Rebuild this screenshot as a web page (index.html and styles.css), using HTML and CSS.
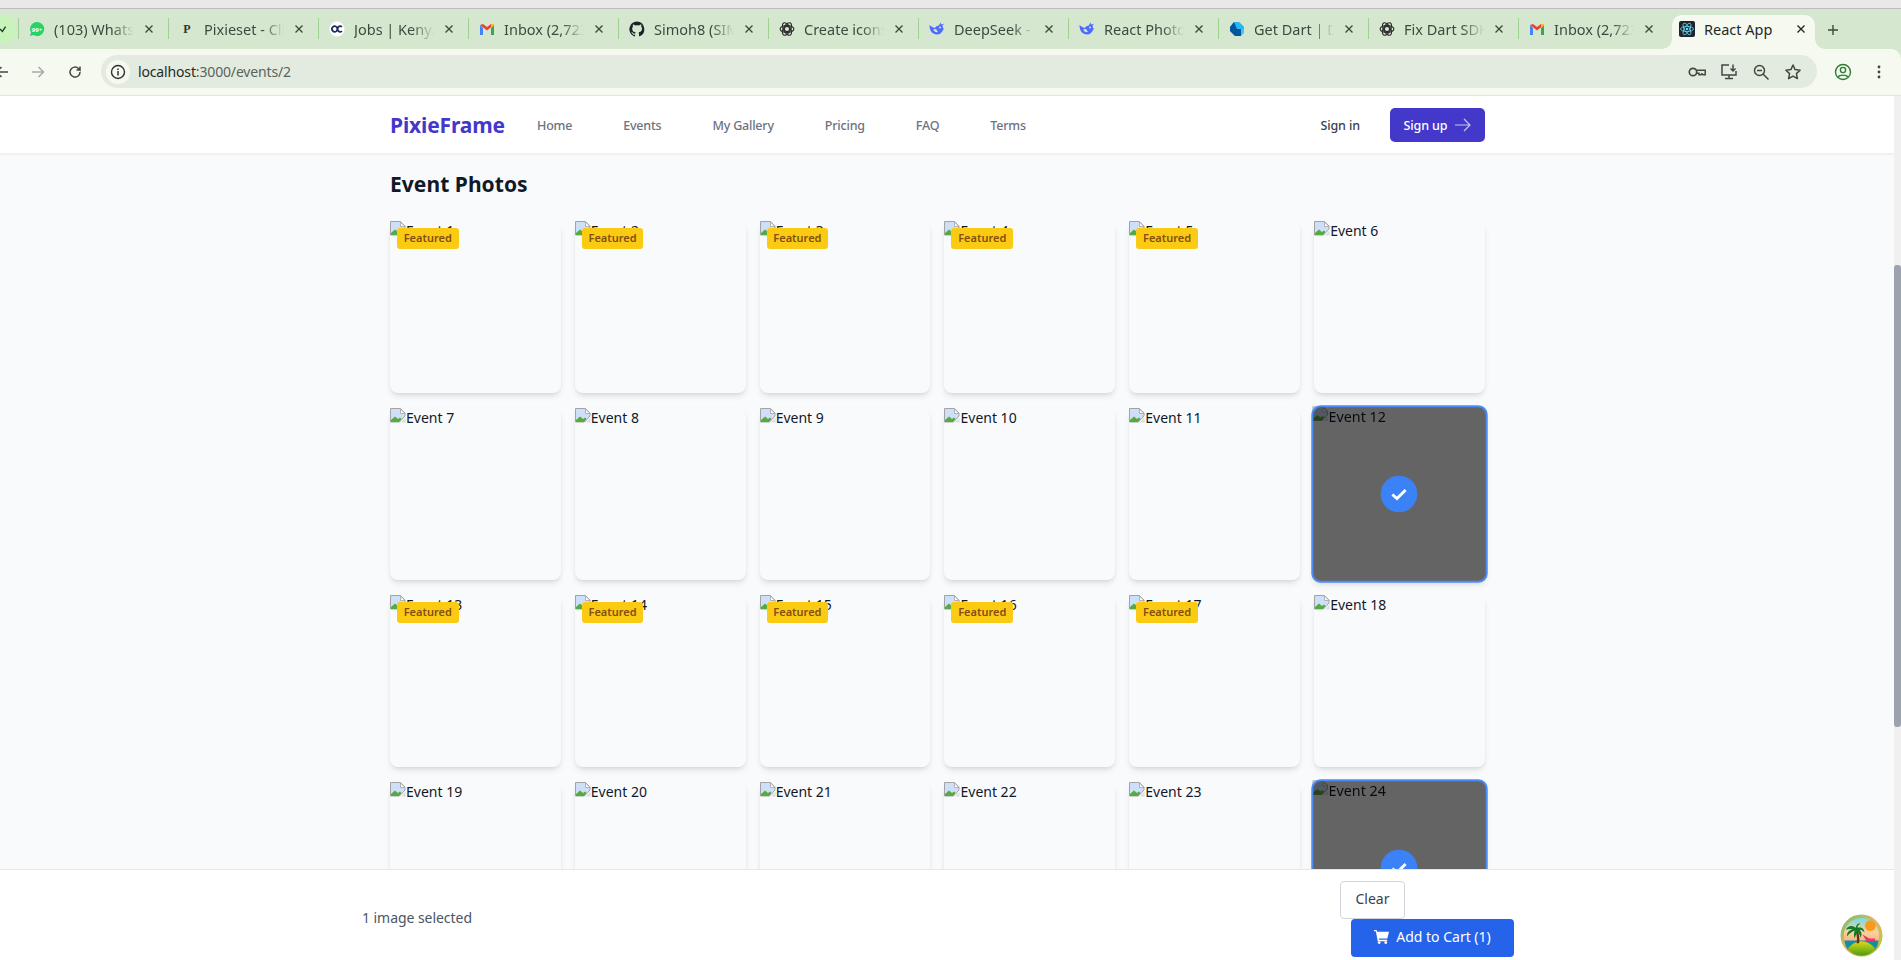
FILE: index.html
```html
<!DOCTYPE html>
<html lang="en">
<head>
<meta charset="utf-8">
<title>React App</title>
<link rel="stylesheet" href="styles.css">
</head>
<body>
<svg class="defs" width="0" height="0" aria-hidden="true">
  <defs>
    <symbol id="broken" viewBox="0 0 16 16">
      <path d="M.5.500h10l4.500 4.500v3l-5.500 6H.5z" fill="#cddff9" stroke="#a3a3a3"/>
      <path d="M10.500 1v4.500H15z" fill="#fff" stroke="#a3a3a3" stroke-width=".8"/>
      <path d="M1 14v-2l4-3.500 3 2.500 2-1.500 1.500 1.500L9 14z" fill="#56ab3e"/>
      <path d="M15.500 9.500L11 14.500h4.500z" fill="#c7c7c7" opacity=".55"/>
    </symbol>
    <symbol id="x" viewBox="0 0 10 10"><path d="M1.500 1.500l7 7m0-7l-7 7" stroke="currentColor" stroke-width="1.400" fill="none"/></symbol>
    <symbol id="gmail" viewBox="0 0 16 16">
      <path d="M1 4v10h3V7z" fill="#4285f4"/><path d="M12 7v7h3V4z" fill="#34a853"/>
      <path d="M1 4l7 5.500L15 4l-3-1-4 3-4-3z" fill="#ea4335"/><path d="M12 3v4l3-2.500V3z" fill="#fbbc04"/>
    </symbol>
    <symbol id="gpt" viewBox="0 0 16 16">
      <g fill="none" stroke="#2b2b2b" stroke-width="1.100">
        <circle cx="8" cy="8" r="2.600"/><ellipse cx="8" cy="8" rx="6.900" ry="3.500"/>
        <ellipse cx="8" cy="8" rx="6.900" ry="3.500" transform="rotate(60 8 8)"/>
        <ellipse cx="8" cy="8" rx="6.900" ry="3.500" transform="rotate(120 8 8)"/>
      </g>
    </symbol>
    <symbol id="whale" viewBox="0 0 16 16">
      <path d="M.5 4c0 6 3 9.500 7.500 9.500 3 0 5-1.800 6-4.500l1.500-1.500H14c0-1-.2-2-.6-2.800l1.600-2-2.500.8L11 1.500c0 1.500-.5 2.700-1.800 3.300C7.500 5 6.500 6 6 7 4 6.500 2 5.500.5 4z" fill="#4d6bfe"/>
      <path d="M4 8.500c1 2 3 3 5 2.500-1-1-1.500-2-1.800-3" fill="#d6e7d0"/>
      <circle cx="11" cy="6.500" r="1" fill="#d6e7d0"/>
    </symbol>
    <symbol id="check" viewBox="0 0 16 16"><path d="M1.500 8.500L6 12.500 14.500 4" fill="none" stroke="#fff" stroke-width="2.800"/></symbol>
  </defs>
</svg>

<header class="chrome">
  <div class="topline"></div>
  <div class="tabstrip">
    <span class="pill"><svg viewBox="0 0 10 10" width="8" height="8"><path d="M0 5l3 3 4-6" fill="none" stroke="#1b3a1b" stroke-width="1.600"/></svg></span>
    <div class="tab"><svg class="fav" viewBox="0 0 16 16"><path d="M8 1a7 7 0 0 0-6 10.500L1 15l3.600-1A7 7 0 1 0 8 1z" fill="#25d366"/><text x="8" y="10.500" class="favtxt">99+</text></svg><span class="tt">(103) WhatsApp</span><svg class="cl"><use href="#x"/></svg></div>
    <div class="tab"><span class="favp">P</span><span class="tt">Pixieset - Client</span><svg class="cl"><use href="#x"/></svg></div>
    <div class="tab"><svg class="fav" viewBox="0 0 16 16"><circle cx="8" cy="8" r="7.500" fill="#fff"/><path d="M7.500 5.800A2.800 2.800 0 1 0 7.500 10.200M7.500 5.800a2.800 2.800 0 0 1 0 4.400" fill="none" stroke="#1d2a5c" stroke-width="1.700"/><path d="M13 5.800a2.800 2.800 0 1 0 0 4.400" fill="none" stroke="#1d2a5c" stroke-width="1.700"/></svg><span class="tt">Jobs | Kenya</span><svg class="cl"><use href="#x"/></svg></div>
    <div class="tab"><svg class="fav"><use href="#gmail"/></svg><span class="tt">Inbox (2,723)</span><svg class="cl"><use href="#x"/></svg></div>
    <div class="tab"><svg class="fav" viewBox="0 0 16 16"><path d="M8 .5a7.700 7.700 0 0 0-2.400 15c.4.100.5-.2.500-.4v-1.400c-2.200.5-2.600-1-2.600-1-.4-.9-.9-1.200-.9-1.200-.7-.5.100-.5.100-.5.800.100 1.200.8 1.200.8.700 1.200 1.900.9 2.300.7.100-.5.300-.9.500-1.100-1.700-.2-3.500-.9-3.500-3.800 0-.8.300-1.500.8-2-.1-.2-.4-1 .1-2 0 0 .7-.2 2.100.8a7 7 0 0 1 3.800 0c1.400-1 2.100-.8 2.100-.8.400 1 .2 1.800.1 2 .5.500.8 1.200.8 2 0 2.900-1.800 3.600-3.500 3.800.3.200.5.700.5 1.400v2.100c0 .2.100.5.500.4A7.700 7.700 0 0 0 8 .5z" fill="#1f2328"/></svg><span class="tt">Simoh8 (SIMON)</span><svg class="cl"><use href="#x"/></svg></div>
    <div class="tab"><svg class="fav"><use href="#gpt"/></svg><span class="tt">Create icons</span><svg class="cl"><use href="#x"/></svg></div>
    <div class="tab"><svg class="fav"><use href="#whale"/></svg><span class="tt">DeepSeek - Into</span><svg class="cl"><use href="#x"/></svg></div>
    <div class="tab"><svg class="fav"><use href="#whale"/></svg><span class="tt">React Photo</span><svg class="cl"><use href="#x"/></svg></div>
    <div class="tab"><svg class="fav" viewBox="0 0 16 16"><path d="M5 1h5l5 5v6l-3 3H6L1 10V6z" fill="#40c4ff"/><path d="M5 1l7 7v7H6L1 10V6z" fill="#01579b"/><path d="M5 1h5l5 5v2H8z" fill="#29b6f6"/></svg><span class="tt">Get Dart | Dart</span><svg class="cl"><use href="#x"/></svg></div>
    <div class="tab"><svg class="fav"><use href="#gpt"/></svg><span class="tt">Fix Dart SDK</span><svg class="cl"><use href="#x"/></svg></div>
    <div class="tab last"><svg class="fav"><use href="#gmail"/></svg><span class="tt">Inbox (2,723)</span><svg class="cl"><use href="#x"/></svg></div>
    <div class="tab active"><svg class="fav" viewBox="0 0 16 16"><rect width="16" height="16" rx="2" fill="#20232a"/><g fill="none" stroke="#61dafb" stroke-width=".8"><ellipse cx="8" cy="8" rx="6.500" ry="2.600"/><ellipse cx="8" cy="8" rx="6.500" ry="2.600" transform="rotate(60 8 8)"/><ellipse cx="8" cy="8" rx="6.500" ry="2.600" transform="rotate(120 8 8)"/></g><circle cx="8" cy="8" r="1.300" fill="#61dafb"/></svg><span class="tt">React App</span><svg class="cl"><use href="#x"/></svg></div>
    <svg class="plus" viewBox="0 0 12 12"><path d="M6 1v10M1 6h10" stroke="#3c4a3c" stroke-width="1.400"/></svg>
  </div>
  <div class="toolbar">
    <div class="navbtns">
      <svg class="tb back" viewBox="0 0 16 16"><path d="M14 8H2.500M7.500 3l-5 5 5 5" fill="none" stroke="#3f4a3f" stroke-width="1.500"/></svg>
      <svg class="tb fwd" viewBox="0 0 16 16"><path d="M2 8h11.500M8.500 3l5 5-5 5" fill="none" stroke="#a4aca2" stroke-width="1.500"/></svg>
      <svg class="tb reload" viewBox="0 0 16 16"><path d="M13 8a5 5 0 1 1-1.500-3.500L13 6V2.500M13 6H9.500" fill="none" stroke="#3f4a3f" stroke-width="1.500"/></svg>
    </div>
    <div class="omni">
      <span class="infoc"><svg viewBox="0 0 16 16" width="16" height="16"><circle cx="8" cy="8" r="6.500" fill="none" stroke="#2b332b" stroke-width="1.400"/><path d="M8 7v4.500M8 4.500v1.400" stroke="#2b332b" stroke-width="1.500"/></svg></span>
      <span class="url"><b>localhost</b>:3000/events/2</span>
      <span class="omnicons">
        <svg viewBox="0 0 18 18" width="18" height="18"><circle cx="5" cy="9" r="3.700" fill="none" stroke="#3f4a3f" stroke-width="1.700"/><path d="M8.700 7.300H17.200v4.500h-2.200l-1-1-1 1h-2V10.200H8.700" fill="none" stroke="#3f4a3f" stroke-width="1.500"/></svg>
        <svg viewBox="0 0 18 18" width="18" height="18"><path d="M9 2H2v10h14V8" fill="none" stroke="#3f4a3f" stroke-width="1.500"/><path d="M5 15.500h8M9 12v3M13 1.500v6M10.500 5.500L13 8l2.500-2.500" fill="none" stroke="#3f4a3f" stroke-width="1.500"/></svg>
        <svg viewBox="0 0 18 18" width="18" height="18"><circle cx="7.500" cy="7.500" r="5" fill="none" stroke="#3f4a3f" stroke-width="1.500"/><path d="M11 11l5.500 5.500M5 7.500h5" stroke="#3f4a3f" stroke-width="1.500"/></svg>
        <svg viewBox="0 0 18 18" width="18" height="18"><path d="M9 2l2.100 4.600 5 .6-3.700 3.400 1 5L9 13.100 4.600 15.600l1-5L1.900 7.200l5-.6z" fill="none" stroke="#3f4a3f" stroke-width="1.500" stroke-linejoin="round"/></svg>
      </span>
    </div>
    <svg class="tb profile" viewBox="0 0 18 18"><circle cx="9" cy="9" r="7.500" fill="none" stroke="#2e7d32" stroke-width="1.400"/><circle cx="9" cy="7" r="2.600" fill="none" stroke="#2e7d32" stroke-width="1.400"/><path d="M4 14c1.500-2.500 8.500-2.500 10 0" fill="none" stroke="#2e7d32" stroke-width="1.400"/></svg>
    <svg class="tb menu" viewBox="0 0 4 16"><circle cx="2" cy="3" r="1.400" fill="#3f4a3f"/><circle cx="2" cy="8" r="1.400" fill="#3f4a3f"/><circle cx="2" cy="13" r="1.400" fill="#3f4a3f"/></svg>
  </div>
</header>

<div class="viewport">
  <div class="page">
    <nav class="nav">
      <div class="nav-in">
        <span class="logo">PixieFrame</span>
        <div class="links"><a>Home</a><a>Events</a><a>My Gallery</a><a>Pricing</a><a>FAQ</a><a>Terms</a></div>
        <div class="auth"><a class="signin">Sign in</a><a class="signup">Sign up<svg viewBox="0 0 16 16" width="16" height="16"><path d="M0 8h15M9 2l6 6-6 6" fill="none" stroke="#c7c5f0" stroke-width="1.200"/></svg></a></div>
      </div>
    </nav>
    <main class="main">
      <h1>Event Photos</h1>
      <div class="grid" id="grid">
        <div class="card"><svg class="bi"><use href="#broken"/></svg><span class="alt">Event 1</span><span class="badge">Featured</span></div>
        <div class="card"><svg class="bi"><use href="#broken"/></svg><span class="alt">Event 2</span><span class="badge">Featured</span></div>
        <div class="card"><svg class="bi"><use href="#broken"/></svg><span class="alt">Event 3</span><span class="badge">Featured</span></div>
        <div class="card"><svg class="bi"><use href="#broken"/></svg><span class="alt">Event 4</span><span class="badge">Featured</span></div>
        <div class="card"><svg class="bi"><use href="#broken"/></svg><span class="alt">Event 5</span><span class="badge">Featured</span></div>
        <div class="card"><svg class="bi"><use href="#broken"/></svg><span class="alt">Event 6</span></div>
        <div class="card"><svg class="bi"><use href="#broken"/></svg><span class="alt">Event 7</span></div>
        <div class="card"><svg class="bi"><use href="#broken"/></svg><span class="alt">Event 8</span></div>
        <div class="card"><svg class="bi"><use href="#broken"/></svg><span class="alt">Event 9</span></div>
        <div class="card"><svg class="bi"><use href="#broken"/></svg><span class="alt">Event 10</span></div>
        <div class="card"><svg class="bi"><use href="#broken"/></svg><span class="alt">Event 11</span></div>
        <div class="card sel"><svg class="bi"><use href="#broken"/></svg><span class="alt">Event 12</span><span class="shade"><span class="tick"><svg width="16" height="16"><use href="#check"/></svg></span></span></div>
        <div class="card"><svg class="bi"><use href="#broken"/></svg><span class="alt">Event 13</span><span class="badge">Featured</span></div>
        <div class="card"><svg class="bi"><use href="#broken"/></svg><span class="alt">Event 14</span><span class="badge">Featured</span></div>
        <div class="card"><svg class="bi"><use href="#broken"/></svg><span class="alt">Event 15</span><span class="badge">Featured</span></div>
        <div class="card"><svg class="bi"><use href="#broken"/></svg><span class="alt">Event 16</span><span class="badge">Featured</span></div>
        <div class="card"><svg class="bi"><use href="#broken"/></svg><span class="alt">Event 17</span><span class="badge">Featured</span></div>
        <div class="card"><svg class="bi"><use href="#broken"/></svg><span class="alt">Event 18</span></div>
        <div class="card"><svg class="bi"><use href="#broken"/></svg><span class="alt">Event 19</span></div>
        <div class="card"><svg class="bi"><use href="#broken"/></svg><span class="alt">Event 20</span></div>
        <div class="card"><svg class="bi"><use href="#broken"/></svg><span class="alt">Event 21</span></div>
        <div class="card"><svg class="bi"><use href="#broken"/></svg><span class="alt">Event 22</span></div>
        <div class="card"><svg class="bi"><use href="#broken"/></svg><span class="alt">Event 23</span></div>
        <div class="card sel"><svg class="bi"><use href="#broken"/></svg><span class="alt">Event 24</span><span class="shade"><span class="tick"><svg width="16" height="16"><use href="#check"/></svg></span></span></div>
      </div>
    </main>
    <footer class="bar">
      <span class="count">1 image selected</span>
      <div class="actions">
        <button class="clear">Clear</button>
        <button class="cart"><svg viewBox="0 0 16 16" width="15" height="15"><path d="M0 1h2.800l.5 2H16l-1.800 7H5l.3 1.500H14V13H4L2 2.500H0z" fill="#fff"/><circle cx="5.500" cy="14.500" r="1.500" fill="#fff"/><circle cx="12.500" cy="14.500" r="1.500" fill="#fff"/></svg>Add to Cart (1)</button>
      </div>
      <svg class="avatar" viewBox="0 0 44 44">
        <defs>
          <linearGradient id="sky" x1="0" y1="0" x2="0" y2="1"><stop offset="0" stop-color="#6fdce8"/><stop offset=".4" stop-color="#fdd29a"/><stop offset="1" stop-color="#fb8f72"/></linearGradient>
          <linearGradient id="ring" x1="0" y1="0" x2="1" y2="1"><stop offset="0" stop-color="#6fc06a"/><stop offset=".5" stop-color="#e6b56b"/><stop offset="1" stop-color="#a7c92e"/></linearGradient>
          <linearGradient id="isle" x1="0" y1="0" x2="0" y2="1"><stop offset="0" stop-color="#d4dc1a"/><stop offset="1" stop-color="#4f9a12"/></linearGradient>
        </defs>
        <circle cx="22" cy="22" r="21.500" fill="url(#ring)"/>
        <circle cx="22" cy="22" r="18" fill="url(#sky)"/>
        <circle cx="31" cy="12" r="5.500" fill="#fb9a1a"/>
        <path d="M4.500 27h35a18 18 0 0 1-4 10H8.500a18 18 0 0 1-4-10z" fill="#138ea3"/>
        <path d="M8 36c3-5 9-8 14-8s11 3 14 8a18 18 0 0 1-28 0z" fill="url(#isle)"/>
        <path d="M17 30c1-6 0-10-2-15h2.500c2 5 3 10 2 15z" fill="#6d2f1a"/>
        <path d="M16 14c-4-3-8-2-10 2 3-1 5-1 7 0-4 0-6 3-6 7 3-3 5-5 8-6-1 3-1 5 0 8 1-3 2-5 3-7 1 2 3 4 3 6 2-3 1-6-1-8 2 0 4 1 5 3 0-4-3-6-7-5 0-2 1-3 3-4-3-1-4 1-5 4z" fill="#157a27"/>
        <path d="M23 21l7 4h6v2.500H27z" fill="#e8386a"/>
      </svg>
    </footer>
  </div>
  <div class="scrollbar"><div class="thumb"></div></div>
</div>
</body>
</html>
```
FILE: styles.css
```css
* { box-sizing: border-box; }
html, body { margin: 0; height: 100%; overflow: hidden; }
body { width: 1901px; height: 960px; font-family: "Noto Sans", "Open Sans", sans-serif; display: flex; flex-direction: column; background: #f9fafb; }
.defs { position: absolute; }

/* browser chrome */
.chrome { height: 96px; flex: none; display: flex; flex-direction: column; background: #d6e7d0; }
.topline { height: 9px; background: #e9e9e9; border-bottom: 1px solid #bdbdbd; }
.tabstrip { height: 40px; background: #d6e7d0; display: flex; align-items: center; position: relative; padding-left: 18px; }
.pill { position: absolute; left: 0; top: 6px; width: 15px; height: 28px; background: #c8f3bb; border-radius: 0 9px 9px 0; display: flex; align-items: center; }
.tab { width: 150px; height: 34px; margin-top: 6px; display: flex; align-items: center; padding-left: 10px; border-left: 1px solid #9fd08f; color: #3f4a3f; font-size: 14px; position: relative; flex: none; border-image: linear-gradient(#0000 4px, #9fd08f 4px, #9fd08f 24px, #0000 24px) 1; }
.tab.active { width: 143px; margin-left: 2px; height: 34px; background: #f6f9f0; border: 0; border-radius: 10px 10px 0 0; padding-left: 7px; color: #1f2a1f; }
.tab.active::before, .tab.active::after { content: ""; position: absolute; bottom: 0; width: 10px; height: 10px; }
.tab.active::before { left: -10px; background: radial-gradient(circle at 0 0, #0000 9.500px, #f6f9f0 10px); }
.tab.active::after { right: -10px; background: radial-gradient(circle at 100% 0, #0000 9.500px, #f6f9f0 10px); }
.tab.last { width: 152px; }
.fav { width: 16px; height: 16px; flex: none; margin-top: -6px; }
.favtxt { font-size: 6px; font-weight: 700; fill: #fff; text-anchor: middle; font-family: "Noto Sans", sans-serif; }
.favp { width: 16px; flex: none; font: 700 12px "Liberation Serif", serif; text-align: center; color: #333; margin-top: -6px; }
.tt { width: 82px; margin: -6px 0 0 9px; white-space: nowrap; overflow: hidden; -webkit-mask-image: linear-gradient(90deg, #000 58px, #0000 80px); mask-image: linear-gradient(90deg, #000 58px, #0000 80px); font-size: 14.500px; }
.active .tt { width: 92px; mask-image: none; -webkit-mask-image: none; }
.cl { width: 10px; height: 10px; margin: -6px 0 0 8px; color: #3f4a3f; flex: none; }
.active .cl { margin-left: 0; color: #1f2a1f; }
.plus { position: absolute; left: 1827px; top: 15px; width: 12px; height: 12px; }
.toolbar { height: 47px; background: #f6f9f0; border-bottom: 1px solid #dfe6da; border-top-right-radius: 10px; display: flex; align-items: center; position: relative; padding-right: 14px; }
.navbtns { width: 101px; height: 16px; position: relative; flex: none; }
.tb { width: 16px; height: 16px; flex: none; }
.navbtns .tb { position: absolute; top: 0; }
.back { left: -6px; }
.fwd { left: 30px; }
.reload { left: 67px; }
.omni { width: 1716px; height: 33px; border-radius: 17px; background: #e3ebe0; display: flex; align-items: center; flex: none; margin-top: -1px; }
.infoc { width: 24px; height: 24px; margin-left: 5px; border-radius: 50%; background: #f6f9f0; display: flex; align-items: center; justify-content: center; flex: none; }
.url { margin-left: 8px; font-size: 14px; color: #5a645a; letter-spacing: -.15px; }
.url b { font-weight: 400; color: #1f2a1f; }
.omnicons { margin-left: auto; margin-right: 15px; display: flex; gap: 14px; }
.profile { width: 18px; height: 18px; margin-left: 17px; }
.menu { width: 4px; margin-left: 25px; }

/* page */
.viewport { flex: 1; min-height: 0; display: flex; }
.page { flex: 1; min-width: 0; position: relative; overflow: hidden; display: flex; flex-direction: column; }
.scrollbar { width: 7px; background: #f0f0f0; padding-top: 169px; }
.thumb { height: 462px; background: #9ca3af; border-radius: 3px; }
.nav { height: 58px; flex: none; background: #fff; border-bottom: 1px solid #eceef1; box-shadow: 0 1px 2px #0000000a; }
.nav-in { width: 1095px; margin-left: 390px; height: 100%; display: flex; align-items: center; }
.logo { font-size: 21px; font-weight: 700; color: #4338ca; letter-spacing: -.15px; width: 147px; flex: none; }
.links { display: flex; gap: 51px; font-size: 12.500px; font-weight: 500; color: #6b7280; letter-spacing: -.2px; padding-top: 1px; }
.auth { margin-left: auto; display: flex; align-items: center; font-size: 12.500px; font-weight: 500; letter-spacing: -.1px; }
.signin { color: #374151; margin-right: 30px; padding-top: 1px; }
.signup { width: 95px; height: 34px; border-radius: 5px; background: #4338ca; color: #fff; display: flex; align-items: center; justify-content: center; gap: 8px; padding-top: 1px; }
.main { padding: 0 0 0 390px; width: 1485px; flex: 1; }
h1 { margin: 16px 0 23px 0; font-size: 21px; line-height: 28px; color: #111827; font-weight: 700; letter-spacing: .05px; }
.grid { display: grid; grid-template-columns: repeat(6, 1fr); grid-auto-rows: 172px; gap: 15px 14px; }
.card { background: #f9fafb; border-radius: 8px; box-shadow: 0 4px 6px -1px #0000001a, 0 2px 4px -2px #0000001a; position: relative; font-size: 14px; line-height: 17px; color: #111827; display: block; }
.bi { width: 16px; height: 16px; position: absolute; left: 0; top: 0; }
.alt { position: absolute; left: 16px; top: 1px; white-space: nowrap; }
.badge { position: absolute; left: 7px; top: 7px; height: 21px; width: 61.500px; background: #fbcb14; border-radius: 3px; font-size: 11px; line-height: 20px; font-weight: 600; color: #854d0e; text-align: center; }
.sel { transform: scale(1.02); }
.shade { position: absolute; inset: -1px; background: #00000099; border: 2px solid #4b8cf8; border-radius: 9px; display: flex; align-items: center; justify-content: center; }
.tick { width: 36px; height: 36px; border-radius: 50%; background: #3b82f6; display: flex; align-items: center; justify-content: center; }
.bar { position: absolute; left: 0; right: 0; bottom: 0; height: 91px; background: #fff; border-top: 1px solid #e5e7eb; }
.count { position: absolute; left: 362px; top: 38px; font-size: 14px; color: #4b5563; letter-spacing: -.05px; }
.actions { position: absolute; left: 1340px; top: 11px; width: 174px; }
.clear { display: block; width: 65px; height: 38px; background: #fff; border: 1px solid #d1d5db; border-radius: 4px; color: #374151; font: 14px "Noto Sans", sans-serif; padding: 0 0 4px; }
.cart { display: flex; align-items: center; justify-content: center; gap: 7px; width: 163px; height: 38px; margin-left: 11px; background: #2563eb; color: #fff; border: 0; border-radius: 4px; font: 14px "Noto Sans", sans-serif; padding: 0 0 3px; }
.avatar { position: absolute; left: 1840px; top: 44px; width: 43px; height: 43px; }
```
